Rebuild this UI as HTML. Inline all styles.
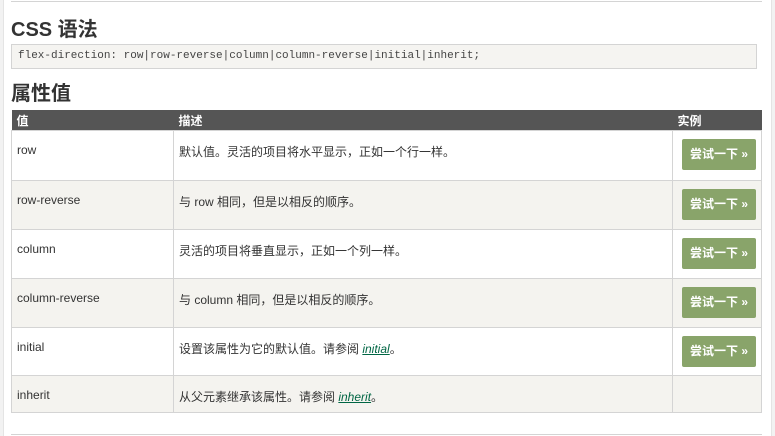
<!DOCTYPE html>
<html><head><meta charset="utf-8"><style>
body{margin:0;width:775px;height:436px;background:#fff;font-family:"Liberation Sans","Noto Sans CJK SC",sans-serif;color:#333;position:relative;overflow:hidden}
.lb{position:absolute;left:0;top:0;width:3px;height:436px;background:#f2f2f2;border-right:1px solid #e4e4e4}
.rb{position:absolute;right:0;top:0;width:3px;height:436px;background:#f2f2f2;border-left:1px solid #e4e4e4}
.hr{position:absolute;left:11px;width:751px;height:0;border-top:1px solid #d4d4d4}
h2{position:absolute;left:11px;margin:0;font-size:20px;font-weight:bold;color:#333}
.code{position:absolute;left:11px;top:44px;width:738px;height:23px;background:#f5f4f1;border:1px solid #d4d4d4;font-family:"Liberation Mono",monospace;font-size:11px;line-height:23px;padding-left:6px;color:#444}
table{position:absolute;left:11px;top:110px;width:751px;border-collapse:collapse;font-size:12px}
th{background:#555;color:#fff;text-align:left;height:20px;padding:0 0 0 5px;font-size:12px;font-weight:bold}
td{border:1px solid #d4d4d4;vertical-align:top;padding:12px 0 0 5px;color:#333}
tr.g td{background:#f4f3ef}
a{color:#064;font-style:italic;text-decoration:underline}
.btn{display:inline-block;width:74px;height:31px;background:#89a46a;color:#fff;font-weight:bold;border-radius:2px;text-align:center;line-height:31px;font-size:12px;margin:-4px 0 0 9px}
td.b{padding-left:0}
</style></head><body>
<div class="lb"></div><div class="rb"></div>
<div class="hr" style="top:1px"></div>
<h2 style="top:13px">CSS 语法</h2>
<div class="code">flex-direction: row|row-reverse|column|column-reverse|initial|inherit;</div>
<h2 style="top:77px">属性值</h2>
<table>
<tr><th style="width:157px">值</th><th style="width:494px">描述</th><th>实例</th></tr>
<tr style="height:50px"><td>row</td><td>默认值。灵活的项目将水平显示，正如一个行一样。</td><td class="b"><span class="btn">尝试一下 »</span></td></tr>
<tr class="g" style="height:49px"><td>row-reverse</td><td>与 row 相同，但是以相反的顺序。</td><td class="b"><span class="btn">尝试一下 »</span></td></tr>
<tr style="height:49px"><td>column</td><td>灵活的项目将垂直显示，正如一个列一样。</td><td class="b"><span class="btn">尝试一下 »</span></td></tr>
<tr class="g" style="height:49px"><td>column-reverse</td><td>与 column 相同，但是以相反的顺序。</td><td class="b"><span class="btn">尝试一下 »</span></td></tr>
<tr style="height:48px"><td>initial</td><td>设置该属性为它的默认值。请参阅 <a>initial</a>。</td><td class="b"><span class="btn">尝试一下 »</span></td></tr>
<tr class="g" style="height:37px"><td>inherit</td><td>从父元素继承该属性。请参阅 <a>inherit</a>。</td><td></td></tr>
</table>
<div class="hr" style="top:434px"></div>
</body></html>
